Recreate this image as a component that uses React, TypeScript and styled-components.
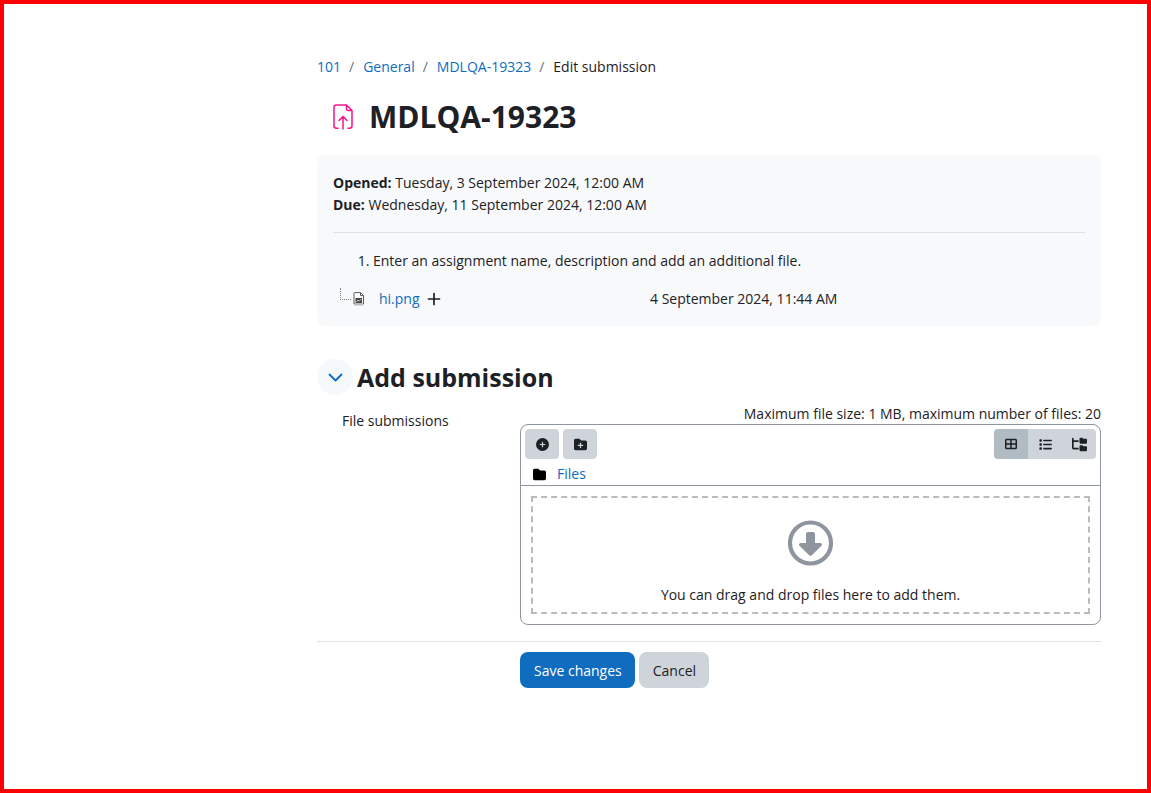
import React from "react";
import styled, { createGlobalStyle } from "styled-components";
import { FaCirclePlus, FaFolderPlus, FaFolder, FaTableCellsLarge, FaList, FaFolderTree } from "react-icons/fa6";

const GlobalStyle = createGlobalStyle`
  *, *::before, *::after { box-sizing: border-box; }
  body {
    margin: 0;
    background: #fff;
    color: #1d2125;
    font-family: "Segoe UI", "Open Sans", sans-serif;
    font-size: 14px;
    line-height: 22px;
  }
  button { font: inherit; color: inherit; cursor: pointer; }
`;

const Page = styled.div`
  min-height: 100vh;
  border: 4px solid #ff0000;
  padding: 52px 46px 40px 313px;
`;

const Link = styled.a`
  color: #0f6cbf;
  text-decoration: none;
  &:hover { text-decoration: underline; }
`;

const Crumbs = styled.ol`
  display: flex;
  margin: 0;
  padding: 0;
  list-style: none;
`;

const Crumb = styled.li`
  & + &::before {
    content: "/";
    padding: 0 9px 0 8px;
    color: #6a737b;
  }
`;

const TitleBar = styled.header`
  display: flex;
  align-items: center;
  gap: 13px;
  margin: 20px 0;
  padding-left: 15px;
`;

const Title = styled.h1`
  margin: 0;
  font-size: 30px;
  line-height: 37px;
  font-weight: 700;
`;

const Summary = styled.section`
  padding: 17px 16px 16px;
  border-radius: 8px;
  background: #f8f9fa;
`;

const Dates = styled.div`
  padding-bottom: 16px;
  border-bottom: 1px solid #dee2e6;
`;

const Steps = styled.ol`
  margin: 17px 0 16px;
  padding-left: 40px;
`;

const FileRow = styled.div`
  display: grid;
  grid-template-columns: 317px 1fr;
  align-items: center;
`;

const FileName = styled.div`
  display: flex;
  align-items: center;
  padding-left: 7px;
`;

const Branch = styled.span`
  width: 11px;
  height: 12px;
  margin: 0 2px 10px 0;
  border-left: 1px dotted #808080;
  border-bottom: 1px dotted #808080;
`;

const FileLink = styled(Link)`
  margin: 0 7px 0 14px;
`;

const SectionHead = styled.div`
  display: flex;
  align-items: center;
  gap: 4px;
  margin-top: 33px;
`;

const Toggle = styled.button`
  display: grid;
  place-items: center;
  width: 36px;
  height: 36px;
  padding: 0;
  border: 0;
  border-radius: 50%;
  background: #f5f9fc;
  color: #0f6cbf;
`;

const SectionTitle = styled.h2`
  margin: 0;
  font-size: 25px;
  line-height: 36px;
  font-weight: 700;
`;

const FormRow = styled.div`
  display: grid;
  grid-template-columns: 203px 1fr;
`;

const Label = styled.div`
  padding: 15px 0 0 25px;
`;

const Limits = styled.div`
  margin-top: 9px;
  line-height: 20px;
  text-align: right;
`;

const Manager = styled.div`
  border: 1px solid #8f959e;
  border-radius: 8px;
`;

const Toolbar = styled.div`
  display: flex;
  justify-content: space-between;
  padding: 4px;
`;

const Tools = styled.div<{ $joined?: boolean }>`
  display: flex;
  gap: ${(p) => (p.$joined ? 0 : 4)}px;
  border-radius: 4px;
  overflow: hidden;
`;

const Tool = styled.button<{ $active?: boolean; $square?: boolean }>`
  display: grid;
  place-items: center;
  width: 34px;
  height: 30px;
  padding: 0;
  border: 0;
  border-radius: ${(p) => (p.$square ? 0 : 4)}px;
  background: ${(p) => (p.$active ? "#b1bbc4" : "#ced4da")};
`;

const PathBar = styled.div`
  display: flex;
  align-items: center;
  gap: 11px;
  padding-left: 12px;
  border-bottom: 1px solid #8f959e;
  color: #000;
`;

const DropZone = styled.div`
  display: flex;
  flex-direction: column;
  align-items: center;
  gap: 18px;
  margin: 10px;
  padding: 22px 8px 6px;
  border: 2px dashed #bbb;
`;

const Footer = styled.footer`
  display: flex;
  gap: 4px;
  margin-top: 16px;
  padding: 10px 0 0 203px;
  border-top: 1px solid #dee2e6;
`;

const Button = styled.button<{ $primary?: boolean }>`
  height: 36px;
  padding: 1px 13px 0 14px;
  border: 0;
  border-radius: 8px;
  background: ${(p) => (p.$primary ? "#0f6cbf" : "#ced4da")};
  color: ${(p) => (p.$primary ? "#fff" : "#1d2125")};
`;

const AssignmentIcon = () => (
  <svg width="24" height="26" viewBox="0 0 24 26" fill="none" stroke="#f7148c" strokeWidth="1.5" strokeLinecap="round" strokeLinejoin="round" aria-hidden="true">
    <path d="M6 24.200H4.500Q2 24.200 2 21.700V3.500Q2 1 4.500 1H14.500L20 6.500V21.700Q20 24.200 17.500 24.200H16M14.500 1V5Q14.500 6.500 16 6.500H20M11 25V13M7 16.500L11 12.500L15 16.500" />
  </svg>
);

const ImageFileIcon = () => (
  <svg width="12" height="14" viewBox="0 0 12 14" fill="none" aria-hidden="true">
    <path d="M1 .5H7.500L10.500 3.500V13.500H1Z" fill="#fff" />
    <path d="M1 11H10.500V13.500H1Z" fill="#bbb" />
    <path d="M1 12V1.500Q1 .6 2 .6H7.500L10.500 3.600V12" stroke="#555b61" />
    <path d="M7.500 .6V3.600H10.500" stroke="#555b61" />
    <path d="M2.500 6H9V11H2.500Z" fill="#444" />
    <path d="M3.300 10L5 8L6.200 9.300L8.300 7" stroke="#ddd" strokeWidth=".8" />
  </svg>
);

const PlusIcon = () => (
  <svg width="14" height="14" viewBox="0 0 14 14" fill="none" stroke="currentColor" strokeWidth="1.700" strokeLinecap="round" aria-hidden="true">
    <path d="M7 1.500V12.500M1.500 7H12.500" />
  </svg>
);

const ChevronIcon = () => (
  <svg width="16" height="16" viewBox="0 0 16 16" fill="none" stroke="currentColor" strokeWidth="1.800" strokeLinecap="round" strokeLinejoin="round" aria-hidden="true">
    <path d="M2.500 5.500L8.500 11.500L14.500 5.500" />
  </svg>
);

const DropIcon = () => (
  <svg width="46" height="46" viewBox="0 0 46 46" aria-hidden="true">
    <circle cx="22.500" cy="23" r="20.500" fill="none" stroke="#8f959e" strokeWidth="4.200" />
    <path d="M20 12H25Q27 12 27 14V23H32.500Q34 23 34 24.500Q34 25.200 33.500 25.700L23.800 35.200Q22.500 36.300 21.200 35.200L11.500 25.700Q11 25.200 11 24.500Q11 23 12.500 23H18V14Q18 12 20 12Z" fill="#8f959e" />
  </svg>
);

export default function App() {
  return (
    <Page>
      <GlobalStyle />
      <nav aria-label="Breadcrumb">
        <Crumbs>
          <Crumb><Link href="#course">101</Link></Crumb>
          <Crumb><Link href="#general">General</Link></Crumb>
          <Crumb><Link href="#assignment">MDLQA-19323</Link></Crumb>
          <Crumb>Edit submission</Crumb>
        </Crumbs>
      </nav>
      <main>
        <TitleBar>
          <AssignmentIcon />
          <Title>MDLQA-19323</Title>
        </TitleBar>
        <Summary>
          <Dates>
            <div><strong>Opened:</strong> Tuesday, 3 September 2024, 12:00 AM</div>
            <div><strong>Due:</strong> Wednesday, 11 September 2024, 12:00 AM</div>
          </Dates>
          <Steps>
            <li>Enter an assignment name, description and add an additional file.</li>
          </Steps>
          <FileRow>
            <FileName>
              <Branch />
              <ImageFileIcon />
              <FileLink href="#hi.png">hi.png</FileLink>
              <PlusIcon />
            </FileName>
            <div>4 September 2024, 11:44 AM</div>
          </FileRow>
        </Summary>
        <form onSubmit={(e) => e.preventDefault()}>
          <SectionHead>
            <Toggle type="button" aria-label="Collapse Add submission" aria-expanded="true"><ChevronIcon /></Toggle>
            <SectionTitle>Add submission</SectionTitle>
          </SectionHead>
          <FormRow role="group" aria-labelledby="files-label">
            <Label id="files-label">File submissions</Label>
            <div>
              <Limits>Maximum file size: 1 MB, maximum number of files: 20</Limits>
              <Manager>
                <Toolbar>
                  <Tools>
                    <Tool type="button" aria-label="Add file"><FaCirclePlus size={13} /></Tool>
                    <Tool type="button" aria-label="Create folder"><FaFolderPlus size={13} /></Tool>
                  </Tools>
                  <Tools $joined>
                    <Tool type="button" $square $active aria-label="Icon view"><FaTableCellsLarge size={12} /></Tool>
                    <Tool type="button" $square aria-label="List view"><FaList size={13} /></Tool>
                    <Tool type="button" $square aria-label="Tree view"><FaFolderTree size={15} /></Tool>
                  </Tools>
                </Toolbar>
                <PathBar>
                  <FaFolder size={13} />
                  <Link href="#files">Files</Link>
                </PathBar>
                <DropZone>
                  <DropIcon />
                  <div>You can drag and drop files here to add them.</div>
                </DropZone>
              </Manager>
            </div>
          </FormRow>
          <Footer>
            <Button type="submit" $primary>Save changes</Button>
            <Button type="button">Cancel</Button>
          </Footer>
        </form>
      </main>
    </Page>
  );
}
